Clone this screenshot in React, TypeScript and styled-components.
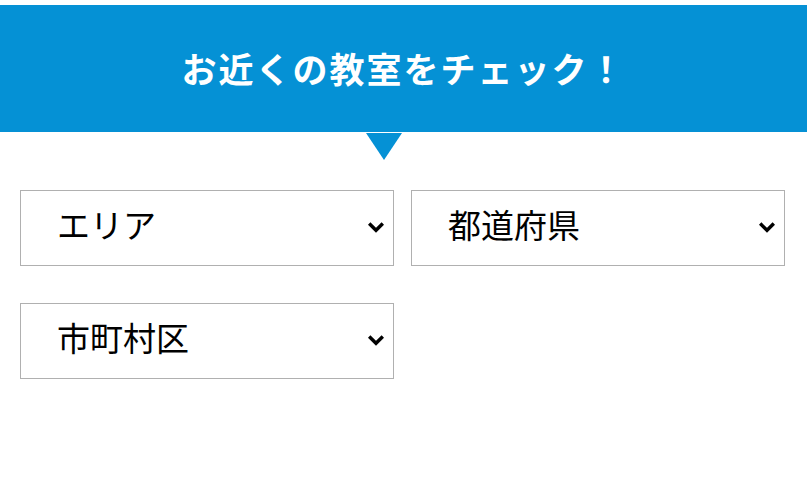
import React from 'react';
import styled, { createGlobalStyle } from 'styled-components';

const GlobalStyle = createGlobalStyle`
  html, body {
    margin: 0;
    padding: 0;
    background: #fff;
  }
  body {
    font-family: "Noto Sans CJK JP", "Noto Sans", sans-serif;
  }
`;

const Page = styled.div`
  padding-top: 5px;
`;

const Banner = styled.div`
  position: relative;
  height: 127px;
  background: #0591d5;
  display: flex;
  align-items: center;
  justify-content: center;
  margin-bottom: 58px;

  &::after {
    content: '';
    position: absolute;
    left: 366px;
    top: 128px;
    border-left: 18px solid transparent;
    border-right: 18px solid transparent;
    border-top: 27px solid #0591d5;
  }
`;

const Heading = styled.h2`
  margin: 0;
  color: #fff;
  font-size: 35px;
  line-height: 1;
  font-weight: 700;
  letter-spacing: 2px;
  padding-bottom: 2px;
`;

const Grid = styled.div`
  display: grid;
  grid-template-columns: 374px 374px;
  column-gap: 17px;
  row-gap: 37px;
  padding-left: 20px;
`;

const Field = styled.div`
  position: relative;
  height: 76px;
`;

const Select = styled.select`
  appearance: none;
  width: 100%;
  height: 100%;
  box-sizing: border-box;
  border: 1px solid #b0b0b0;
  border-radius: 0;
  background: #fff;
  padding: 0 40px 8px 36px;
  font-family: "Noto Sans CJK JP", sans-serif;
  font-size: 33px;
  color: #000;
  outline: none;
`;

const Chevron = styled.svg`
  position: absolute;
  right: 9px;
  top: 31px;
  width: 18px;
  height: 12px;
  pointer-events: none;
`;

function Dropdown({ label }: { label: string }) {
  return (
    <Field>
      <Select defaultValue="">
        <option value="">{label}</option>
      </Select>
      <Chevron viewBox="0 0 18 12">
        <path d="M2.2 2.5 L9 9.3 L15.8 2.5" fill="none" stroke="#000" strokeWidth="3.4" />
      </Chevron>
    </Field>
  );
}

export default function App() {
  return (
    <Page>
      <GlobalStyle />
      <Banner>
        <Heading>お近くの教室をチェック！</Heading>
      </Banner>
      <Grid>
        <Dropdown label="エリア" />
        <Dropdown label="都道府県" />
        <Dropdown label="市町村区" />
      </Grid>
    </Page>
  );
}
